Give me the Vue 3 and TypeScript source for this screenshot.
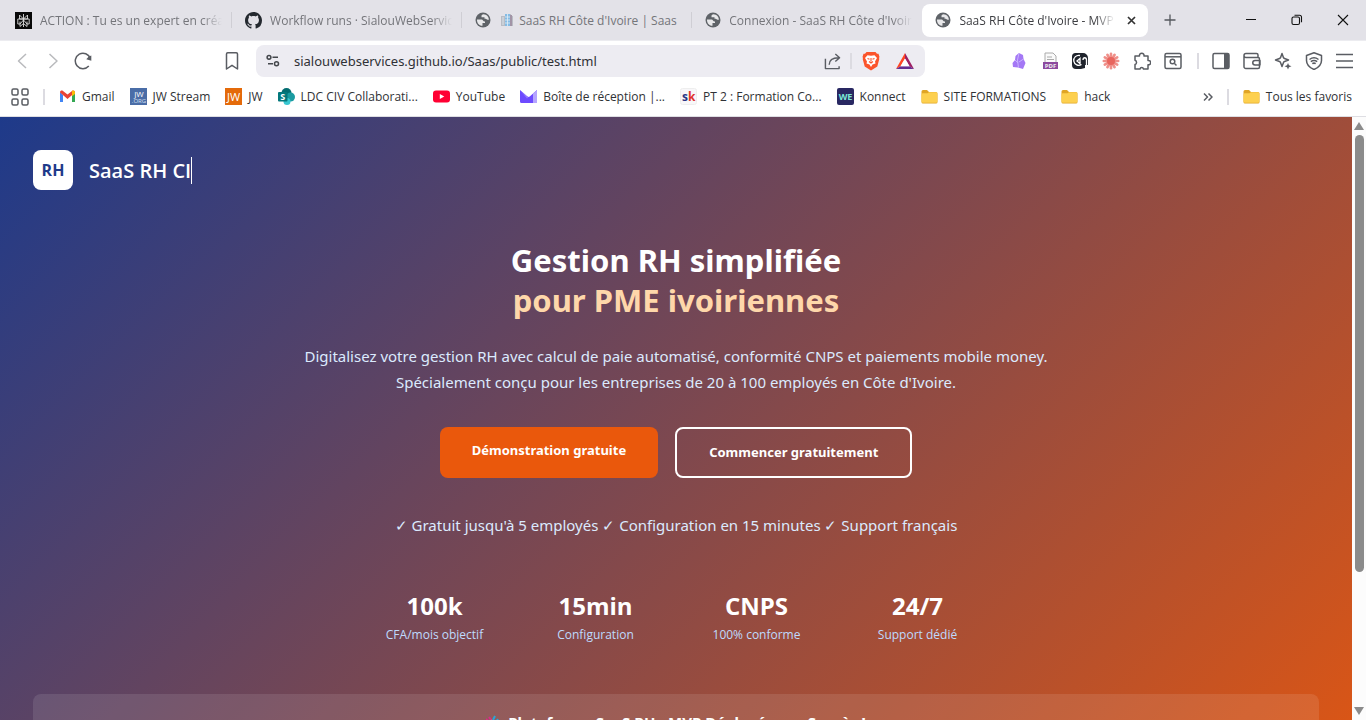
<script setup lang="ts">
interface Tab { title: string; icon: 'square' | 'github' | 'globe'; building?: boolean; active?: boolean }
interface Bookmark { label: string; icon: string }
interface Stat { value: string; label: string }

const tabs: Tab[] = [
  { title: 'ACTION : Tu es un expert en création', icon: 'square' },
  { title: 'Workflow runs · SialouWebServices', icon: 'github' },
  { title: "SaaS RH Côte d'Ivoire | Saas", icon: 'globe', building: true },
  { title: "Connexion - SaaS RH Côte d'Ivoire", icon: 'globe' },
  { title: "SaaS RH Côte d'Ivoire - MVP", icon: 'globe', active: true },
]
const bookmarks: Bookmark[] = [
  { label: 'Gmail', icon: 'gmail' },
  { label: 'JW Stream', icon: 'jworg' },
  { label: 'JW', icon: 'jw' },
  { label: 'LDC CIV Collaborati...', icon: 'sharepoint' },
  { label: 'YouTube', icon: 'youtube' },
  { label: 'Boîte de réception |...', icon: 'proton' },
  { label: 'PT 2 : Formation Co...', icon: 'sk' },
  { label: 'Konnect', icon: 'we' },
  { label: 'SITE FORMATIONS', icon: 'folder' },
  { label: 'hack', icon: 'folder' },
]
const stats: Stat[] = [
  { value: '100k', label: 'CFA/mois objectif' },
  { value: '15min', label: 'Configuration' },
  { value: 'CNPS', label: '100% conforme' },
  { value: '24/7', label: 'Support dédié' },
]
const petals = [0, 30, 60, 90, 120, 150]
</script>

<template>
  <div class="window">
    <svg class="defs" aria-hidden="true">
      <defs>
        <symbol id="folder" viewBox="0 0 17 17">
          <path d="M.5 3.500A1.500 1.500 0 0 1 2 2h4l2 2h7a1.500 1.500 0 0 1 1.500 1.500v8.500a1.500 1.500 0 0 1-1.500 1.500H2A1.500 1.500 0 0 1 .5 14z" fill="#e0a526" />
          <path d="M.5 6.500A1.500 1.500 0 0 1 2 5.200h4.500L8 4.300h7a1.300 1.300 0 0 1 1.300 1.300v7.900a1.300 1.300 0 0 1-1.300 1.300H2A1.500 1.500 0 0 1 .5 13.300z" fill="#fdd04f" />
        </symbol>
        <symbol id="globe" viewBox="0 0 16 16">
          <circle cx="8" cy="8" r="7.500" fill="#5f6368" />
          <path d="M2 7.500h4.500c1.500 0 1.500 2 3 2h.5V11H7.500v2.800C4.500 14 1.800 11.500 2 7.500z" fill="#e8e8ea" />
          <path d="M8.500 2.200c-1 0-2 .8-2 1.600v1.400h3v1.600h1.200c.8 0 .9 1 1.900 1h1.300c0-3-2.200-5.400-5.400-5.600z" fill="#e8e8ea" />
        </symbol>
      </defs>
    </svg>

    <header class="tabstrip">
      <div class="tabs" role="tablist">
        <button v-for="tab in tabs" :key="tab.title" class="tab" :class="{ active: tab.active }" role="tab" :aria-selected="!!tab.active">
          <svg v-if="tab.icon === 'square'" class="fav" viewBox="0 0 17 17">
            <rect width="17" height="17" fill="#090909" />
            <path d="M8.500 2v13M4.500 3l4 4 4-4v4h-8zM2.800 7h11.400v5H12L8.500 8 5 12H2.800zM5 9.500v5l3.500-3 3.500 3v-5" fill="none" stroke="#ddd" stroke-width=".9" />
          </svg>
          <svg v-else-if="tab.icon === 'github'" class="fav" viewBox="0 0 16 16">
            <path fill="#24292f" d="M8 0C3.580 0 0 3.580 0 8c0 3.540 2.290 6.530 5.470 7.590.4.070.55-.17.55-.38 0-.19-.01-.82-.01-1.490-2.010.37-2.530-.49-2.690-.94-.09-.23-.48-.94-.82-1.130-.28-.15-.68-.52-.01-.53.63-.01 1.080.58 1.230.82.72 1.210 1.870.87 2.330.66.07-.52.28-.87.51-1.070-1.780-.2-3.640-.89-3.640-3.950 0-.87.31-1.590.82-2.150-.08-.2-.36-1.020.08-2.120 0 0 .67-.21 2.200.82.64-.18 1.320-.27 2-.27s1.360.09 2 .27c1.530-1.040 2.200-.82 2.200-.82.44 1.100.16 1.920.08 2.120.51.56.82 1.270.82 2.150 0 3.070-1.870 3.750-3.650 3.950.29.25.54.73.54 1.480 0 1.070-.01 1.930-.01 2.200 0 .21.15.46.55.38A8.010 8.010 0 0 0 16 8c0-4.420-3.580-8-8-8z" />
          </svg>
          <svg v-else class="fav globe"><use href="#globe" /></svg>
          <svg v-if="tab.building" class="building" viewBox="0 0 12 14">
            <path d="M0 3h4V1h6v2h2v10H0z" fill="#b9bcc4" /><path d="M4 1h5v12H4z" fill="#85bbe4" />
            <path d="M6.500 1v12M4 4h5M4 7h5M4 10h5M2 4v8" stroke="#e1edf5" stroke-width=".8" /><path d="M9 2h2v11H9z" fill="#a294a6" />
          </svg>
          <span class="tab-title">{{ tab.title }}</span>
          <svg v-if="tab.active" class="tab-close" viewBox="0 0 9 9"><path d="M1 1l7 7M8 1L1 8" stroke="#333" stroke-width="1.700" /></svg>
        </button>
      </div>
      <button class="newtab" aria-label="Nouvel onglet"><svg width="12" height="12" viewBox="0 0 12 12"><path d="M6 .5v11M.5 6h11" stroke="#55585d" stroke-width="1.300" /></svg></button>
      <div class="controls">
        <button aria-label="Réduire"><svg viewBox="0 0 12 12"><path d="M1 5.500h10" stroke="#111" /></svg></button>
        <button aria-label="Restaurer"><svg viewBox="0 0 12 12"><rect x="1" y="3" width="7.500" height="7.500" rx="1.500" fill="none" stroke="#111" stroke-width="1.100" /><path d="M3.500 1.300h5A2 2 0 0 1 10.500 3.300v5" fill="none" stroke="#111" stroke-width="1.100" /></svg></button>
        <button aria-label="Fermer"><svg viewBox="0 0 12 12"><path d="M1 1l10 10M11 1L1 11" stroke="#111" stroke-width="1.100" /></svg></button>
      </div>
    </header>

    <div class="toolbar">
      <div class="nav">
        <button aria-label="Retour"><svg viewBox="0 0 18 18"><path d="M12 2L4.500 9l7.500 7" class="l pale" /></svg></button>
        <button aria-label="Avancer"><svg viewBox="0 0 18 18"><path d="M5.500 2L13 9l-7.500 7" class="l pale" /></svg></button>
        <button aria-label="Actualiser"><svg viewBox="0 0 18 18"><path d="M16.300 6.500A7.700 7.700 0 1 0 14.800 14" class="l" /><path d="M12.300 7.200l5 1.600V3.500l-2.500 1z" fill="#5a5d63" /></svg></button>
      </div>
      <button class="mark" aria-label="Favori"><svg viewBox="0 0 18 18"><path d="M3.500 2a1.200 1.200 0 0 1 1.200-1.200h8.600A1.200 1.200 0 0 1 14.500 2v15L9 13.300 3.500 17z" class="l" /></svg></button>
      <div class="omnibox">
        <svg class="tune" viewBox="0 0 14 14"><g fill="none" stroke="#44474c" stroke-width="1.500"><circle cx="3" cy="3.300" r="1.900" /><path d="M6.500 3.300h5.500M2 9.800h5" /><circle cx="10.500" cy="9.800" r="2" /></g></svg>
        <input class="url-input" aria-label="Adresse" value="sialouwebservices.github.io/Saas/public/test.html" />
        <svg class="share" viewBox="0 0 18 18"><path d="M1.500 6v10.500H16V14M5.500 12.500c0-5 3-7.500 10-7.500M12 1l4.500 4-4.500 4" class="l" /></svg>
        <i class="rule"></i>
        <svg class="lion" viewBox="0 0 18 20">
          <path d="M4.500 1h9L15 2.800l1.500-.1L17.500 6 17 7l.3 1-2 7.500L9 19.500l-6.300-4L.7 8 1 7 .5 6l1-3.300 1.500.1z" fill="#fb542b" />
          <path d="M5.500 4.200l3.500.6 3.500-.6L15 7l-2 3.500.5 2-3 1-1.500 2.500-1.500-2.500-3-1 .5-2L3 7z" fill="#fff" />
          <path d="M5.500 7.500l2 .8M12.500 7.500l-2 .8M9 7v3.500M7 10.500l2 1.500 2-1.500" stroke="#fb542b" stroke-width="1.100" fill="none" />
        </svg>
        <svg class="bat" viewBox="0 0 20 18"><path d="M10 1L1 17l4.500-2.700L10 6.500z" fill="#ff4724" /><path d="M10 1l9 16-4.500-2.700L10 6.500z" fill="#9e1f63" /><path d="M1 17h18l-4.500-2.700h-9z" fill="#662d91" /><path d="M10 6.500l4.500 7.800h-9z" fill="#fff" /></svg>
      </div>
      <div class="exts">
        <button aria-label="Obsidian"><svg viewBox="0 0 18 18"><path d="M10 1l4 2 .5 4 2 4-2.500 6-5-1.500L4 15l-.5-4L6 8l.5-4z" fill="#a478f5" /><path d="M10 1L8.500 8l1 8M6 8l3 3M14.500 7L10 10" stroke="#c9b2ff" fill="none" /></svg></button>
        <button aria-label="PDF"><svg viewBox="0 0 18 18"><path d="M5 1h8l3 3v8H5z" fill="#fafafa" stroke="#aaa" /><path d="M7 5h5M7 7.500h7" stroke="#aaa" /><rect x="3" y="10" width="15" height="7" fill="#8c4a9e" /><text x="10.500" y="16" text-anchor="middle" font-size="6" font-weight="700" fill="#eee">PDF</text></svg></button>
        <button aria-label="Lecteur"><svg viewBox="0 0 18 18"><path d="M1 4.500A3.500 3.500 0 0 1 4.500 1H12a5 5 0 0 1 5 5v7h-3v3l-4 1H5a4 4 0 0 1-4-4z" fill="#20242d" /><path d="M9 3.500a5 5 0 1 0 1.500 9M9 6.500v5L6 9z" fill="none" stroke="#fff" stroke-width="1.300" /><path d="M12 8c0-3 3.500-3 3.500 0v6" fill="none" stroke="#fff" stroke-width="1.300" /></svg></button>
        <button aria-label="Extension"><svg viewBox="0 0 18 18"><g stroke="#ef8f89" stroke-width="2.600" stroke-linecap="round"><path v-for="a in petals" :key="a" d="M9 1.800v14.400" :transform="`rotate(${a} 9 9)`" /></g><circle cx="9" cy="9" r="4" fill="#e8655d" /></svg></button>
        <button aria-label="Extensions"><svg viewBox="0 0 18 18"><path d="M2 4h4.500a2.300 2.300 0 1 1 4.500 0h4v4.500a2.200 2.200 0 1 1 0 4.300V17h-4.500a1.800 1.800 0 0 0-3.500 0H2v-4.500a2.200 2.200 0 0 0 0-4.200z" class="l" /></svg></button>
        <button aria-label="Recherche"><svg viewBox="0 0 18 18"><rect x="1" y="1.500" width="16" height="15" rx="1.500" class="l" /><path d="M1 4.800h16" class="l" /><circle cx="8.500" cy="9.500" r="2.300" class="l" /><path d="M10.500 11.500l2 2" class="l" /></svg></button>
      </div>
      <i class="rule"></i>
      <div class="exts right">
        <button aria-label="Panneau latéral"><svg viewBox="0 0 18 18"><rect x="1" y="1.500" width="16" height="15" rx="1.500" class="l" /><path d="M12 2h5v14.500h-5z" fill="#5a5d63" /></svg></button>
        <button aria-label="Portefeuille"><svg viewBox="0 0 18 18"><path d="M15 5.500V3A1.500 1.500 0 0 0 13.500 1.500H3a2 2 0 0 0 0 4h12A1.500 1.500 0 0 1 16.500 7v8a1.500 1.500 0 0 1-1.500 1.500H3A1.800 1.800 0 0 1 1 14.700V3.500M17 8.500h-5a2.200 2.200 0 0 0 0 4.500h5z" class="l" /></svg></button>
        <button aria-label="Leo"><svg viewBox="0 0 18 18"><path d="M8 1.500l1.500 4.200Q9.800 6.300 10.500 6.500L14.500 8l-4 1.500q-.7.2-1 1L8 14.500l-1.500-4q-.3-.8-1-1L1.500 8l4-1.500q.7-.2 1-.8z" class="l" /><path d="M14 11l1 2.200 2.500 1-2.500 1-1 2.300-1-2.300-2.500-1 2.500-1z" fill="#5a5d63" /></svg></button>
        <button aria-label="VPN"><svg viewBox="0 0 18 18"><path d="M9 .8l7.500 2.700v5c0 4-2.500 6.800-7.500 9-5-2.200-7.500-5-7.500-9v-5z" class="l" /><path d="M4.500 7.500c3-2.200 6-2.200 9 0M5.800 9.700c2.200-1.600 4.200-1.600 6.400 0M7.300 11.700c1.200-.8 2.200-.8 3.400 0" class="l" /></svg></button>
        <button aria-label="Menu"><svg viewBox="0 0 18 18"><path d="M0 2.500h17M0 9h17M0 15.500h17" class="l" /></svg></button>
      </div>
    </div>

    <nav class="bookmarks">
      <button class="apps" aria-label="Applications"><svg viewBox="0 0 18 18"><g class="l"><rect x="1" y="1" width="6" height="6" rx="1.500" /><rect x="11" y="1" width="6" height="6" rx="1.500" /><rect x="1" y="11" width="6" height="6" rx="1.500" /><rect x="11" y="11" width="6" height="6" rx="1.500" /></g></svg></button>
      <i class="rule"></i>
      <a v-for="b in bookmarks" :key="b.label" href="#" class="bookmark">
        <svg v-if="b.icon === 'gmail'" viewBox="0 0 17 17"><path d="M1 4v10h3V7z" fill="#4285f4" /><path d="M16 4v10h-3V7z" fill="#34a853" /><path d="M1 4.500c0-2 2-2.500 3-1.500l4.500 3.500L13 3c1.500-1 3 0 3 1.500L8.500 11z" fill="#ea4335" /><path d="M13 3c1.500-1 3 0 3 1.500V6l-3 2.300z" fill="#fbbc04" /></svg>
        <svg v-else-if="b.icon === 'jworg'" viewBox="0 0 17 17"><rect width="17" height="17" fill="#4a6da7" /><text x="9" y="9" text-anchor="middle" font-size="8" fill="#fff">JW</text><text x="9" y="15" text-anchor="middle" font-size="6" fill="#d6e0f2">.ORG</text></svg>
        <svg v-else-if="b.icon === 'jw'" viewBox="0 0 17 17"><rect width="17" height="17" fill="#e46a0a" /><text x="8.500" y="13" text-anchor="middle" font-size="11" fill="#fff">JW</text></svg>
        <svg v-else-if="b.icon === 'sharepoint'" viewBox="0 0 17 17"><circle cx="8.500" cy="5" r="5" fill="#036c70" /><circle cx="12.500" cy="9" r="4.500" fill="#1a9ba1" /><circle cx="9" cy="13.500" r="3.500" fill="#37c6d0" /><rect y="4" width="9.500" height="9.500" rx="1" fill="#03787c" /><text x="4.800" y="12" text-anchor="middle" font-size="9" font-weight="700" fill="#fff">S</text></svg>
        <svg v-else-if="b.icon === 'youtube'" viewBox="0 0 17 17"><rect y="2.500" width="17" height="12" rx="3" fill="#ff0033" /><path d="M6.800 6v5l4.500-2.500z" fill="#fff" /></svg>
        <svg v-else-if="b.icon === 'proton'" viewBox="0 0 17 17"><path d="M0 2l7 6.200c1 .9 2 .9 3 0L17 2v13H1.500A1.500 1.500 0 0 1 0 13.500z" fill="#6d4aff" /><path d="M0 2l7 6.200 1.500.7L7 10.500z" fill="#9177ff" /><path d="M13 5.500L17 2v13h-4z" fill="#b5a4ff" /></svg>
        <svg v-else-if="b.icon === 'sk'" viewBox="0 0 17 17"><rect x=".5" y=".5" width="16" height="16" rx="2" fill="#f8f7f9" stroke="#eee" /><text x="2" y="13" font-size="12" font-weight="700" fill="#283583">s<tspan fill="#e0322d">k</tspan></text></svg>
        <svg v-else-if="b.icon === 'we'" viewBox="0 0 17 17"><rect width="17" height="17" rx="2" fill="#292862" /><text x="8.500" y="12" text-anchor="middle" font-size="9" font-weight="700" fill="#7ce9d5">WE</text></svg>
        <svg v-else><use href="#folder" /></svg>
        <span>{{ b.label }}</span>
      </a>
      <button class="more" aria-label="Plus de favoris"><svg viewBox="0 0 10 10"><path d="M1 1.500L4.500 5 1 8.500M5.500 1.500L9 5 5.500 8.500" class="l" /></svg></button>
      <i class="rule"></i>
      <a href="#" class="bookmark all"><svg><use href="#folder" /></svg><span>Tous les favoris</span></a>
    </nav>

    <div class="viewport">
      <main class="page">
        <div class="brand"><span class="logo">RH</span><span class="brand-name">SaaS RH CI</span></div>
        <section class="hero">
          <h1>Gestion RH simplifiée<br /><span>pour PME ivoiriennes</span></h1>
          <p class="lead">Digitalisez votre gestion RH avec calcul de paie automatisé, conformité CNPS et paiements mobile money.<br />Spécialement conçu pour les entreprises de 20 à 100 employés en Côte d'Ivoire.</p>
          <div class="actions">
            <button class="cta primary">Démonstration gratuite</button>
            <button class="cta outline">Commencer gratuitement</button>
          </div>
          <p class="perks">✓ Gratuit jusqu'à 5 employés ✓ Configuration en 15 minutes ✓ Support français</p>
          <div class="stats">
            <div v-for="s in stats" :key="s.value"><strong>{{ s.value }}</strong><span>{{ s.label }}</span></div>
          </div>
        </section>
        <section class="card">
          <h2><svg viewBox="0 0 16 16"><path d="M1 15L5 5l6 6z" fill="#f2b844" /><path d="M3 3l2 3M0 5l2 2" stroke="#d82c87" stroke-width="2" /><path d="M9 2L7 6M12 5l-2 3" stroke="#2ba5d8" stroke-width="2" /></svg>Plateforme SaaS RH - MVP Déployé avec Succès !</h2>
        </section>
      </main>
      <div class="scrollbar">
        <svg viewBox="0 0 10 8"><path d="M5 0l5 8H0z" fill="#8b8b8b" /></svg>
        <div class="track"><div class="thumb"></div></div>
        <svg viewBox="0 0 10 8"><path d="M0 0h10L5 8z" fill="#8b8b8b" /></svg>
      </div>
    </div>
  </div>
</template>

<style>
body { margin: 0; overflow: hidden; }
</style>

<style scoped>
* { box-sizing: border-box; }
.window { display: flex; flex-direction: column; height: 100vh; font-family: "Open Sans", "Noto Sans", sans-serif; font-size: 12px; color: #303236; background: #fff; }
.defs { display: none; }
button { border: 0; background: none; padding: 0; font: inherit; color: inherit; display: flex; align-items: center; justify-content: center; flex: none; }
svg { flex: none; display: block; }
.l { fill: none; stroke: #5a5d63; stroke-width: 1.500; stroke-linejoin: round; }
.pale { stroke: #b9babd; }
.rule { flex: none; width: 2px; height: 16px; background: #dcdbe1; }

.tabstrip { display: flex; align-items: center; height: 41px; background: #e3e2e8; border-bottom: 1px solid #ececf0; }
.tabs { display: flex; width: 1148px; min-width: 0; flex: 0 1 auto; padding-left: 2px; }
.tab { position: relative; flex: 230 1 0; min-width: 0; height: 33px; padding: 0 10px 0 13px; gap: 8px; justify-content: flex-start; color: #74757a; }
.tab:not(.active)::after { content: ""; position: absolute; right: 0; top: 8px; width: 1px; height: 16px; background: #cfced4; }
.tab:nth-last-child(2)::after { display: none; }
.tab.active { flex-grow: 225; background: #fff; border-radius: 8px; color: #3c3d41; }
.fav { width: 17px; height: 17px; }
.globe { width: 16px; height: 16px; }
.building { width: 12px; height: 14px; margin-left: 2px; }
.tab-title { flex: 1; min-width: 0; overflow: hidden; white-space: nowrap; text-align: left; mask-image: linear-gradient(to right, #000 calc(100% - 20px), transparent); }
.building + .tab-title { margin-left: -2px; mask-image: none; }
.tab-close { width: 9px; height: 9px; margin: 0 2px 0 4px; }
.newtab { width: 44px; height: 33px; }
.controls { display: flex; margin-left: auto; }
.controls button { width: 46px; height: 40px; }
.controls svg { width: 12px; height: 12px; }

.toolbar { display: flex; align-items: center; height: 40px; padding-right: 12px; }
.nav { display: flex; gap: 12px; padding-left: 14px; }
.nav svg, .mark svg, .exts svg { width: 18px; height: 18px; }
.mark { margin-left: 131px; }
.omnibox { display: flex; align-items: center; flex: 1; height: 32px; margin-left: 15px; padding: 0 10px; border-radius: 8px; background: #edecf2; }
.tune { width: 14px; height: 14px; }
.url-input { flex: 1; min-width: 0; margin-left: 14px; padding: 0; border: 0; outline: 0; background: none; font: 13px "Noto Sans", sans-serif; color: #2f3136; }
.share { width: 17px; height: 17px; }
.omnibox .rule { margin: 0 10px 0 9px; }
.lion { width: 18px; height: 20px; }
.bat { width: 20px; height: 18px; margin-left: 15px; }
.exts { display: flex; gap: 13px; margin: 0 15px 0 84px; }
.exts.right { margin: 0 0 0 13px; }

.bookmarks { display: flex; align-items: center; height: 36px; padding: 0 14px 4px 11px; border-bottom: 1px solid #dedee3; }
.apps svg { width: 18px; height: 18px; }
.bookmarks > .rule { margin-left: 14px; }
.bookmark { display: flex; align-items: center; gap: 6px; margin-left: 15px; color: inherit; text-decoration: none; white-space: nowrap; }
.rule + .bookmark { margin-left: 14px; }
.bookmark svg { width: 17px; height: 17px; }
.more { margin-left: auto; }
.more svg { width: 10px; height: 10px; }

.viewport { display: flex; flex: 1; min-height: 0; overflow: hidden; }
.page { flex: 1; min-width: 0; min-height: 130%; height: max-content; padding: 33px; font-family: "Noto Sans", "Open Sans", sans-serif; background: linear-gradient(135deg, #1e3a8a, #ea580c); color: #fff; }
.brand { display: flex; align-items: center; gap: 16px; font-family: "Open Sans", "Noto Sans", sans-serif; }
.logo { display: grid; place-items: center; width: 40px; height: 40px; border-radius: 8px; background: #fff; color: #1e3a8a; font-size: 16px; font-weight: 700; }
.brand-name { border-right: 1px solid #fff; font-size: 20px; line-height: 27px; font-weight: 600; }
.hero { display: flex; flex-direction: column; align-items: center; padding-top: 50px; text-align: center; }
h1 { margin: 0; font-size: 31px; line-height: 40px; font-weight: 700; }
h1 span { color: #fed7aa; }
.lead { margin: 23px 0 0; font-size: 15px; line-height: 26px; color: #dbeafe; }
.actions { display: flex; gap: 17px; margin-top: 32px; }
.cta { height: 51px; padding: 0 32px 2px; border-radius: 8px; font-size: 13px; font-weight: 700; }
.primary { background: #ea580c; padding-bottom: 6px; }
.outline { border: 2px solid #fff; }
.perks { margin: 34px 0 0; font-size: 15px; line-height: 26px; color: #dbeafe; }
.stats { display: grid; grid-template-columns: repeat(4, 129px); gap: 32px; margin-top: 50px; font-family: "Open Sans", "Noto Sans", sans-serif; }
.stats strong { display: block; font-size: 24px; line-height: 36px; }
.stats span { display: block; margin-top: 1px; font-size: 12px; line-height: 20px; color: #bfdbfe; }
.card { margin-top: 49px; padding: 14px 32px 32px; border-radius: 8px; background: rgba(255, 255, 255, .1); }
h2 { display: flex; justify-content: center; align-items: center; gap: 6px; margin: 0; font-size: 15px; line-height: 28px; font-weight: 700; }
h2 svg { width: 16px; height: 16px; }

.scrollbar { display: flex; flex-direction: column; align-items: center; width: 14px; padding: 5px 0; background: #fcfcfc; }
.scrollbar svg { width: 10px; height: 8px; }
.track { flex: 1; width: 9px; margin: 5px 0; }
.thumb { height: 77%; border-radius: 5px; background: #8b8b8b; }
</style>
